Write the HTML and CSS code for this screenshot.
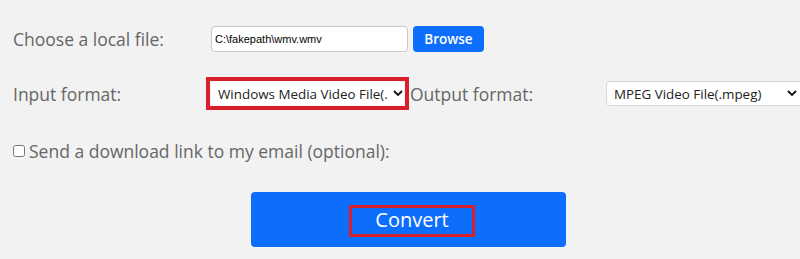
FILE: index.html
```html
<!DOCTYPE html>
<html lang="en">
<head>
<meta charset="utf-8">
<title>Convert</title>
<link rel="stylesheet" href="styles.css">
</head>
<body>
<form class="form">
  <div class="row row-file">
    <label class="label label-file">Choose a local file:</label>
    <input class="file-input" type="text" value="C:\fakepath\wmv.wmv">
    <button type="button" class="browse">Browse</button>
  </div>
  <div class="row row-format">
    <label class="label label-in">Input format:</label>
    <span class="highlight">
      <span class="select-wrap sel-in">
        <select class="select"><option>Windows Media Video File(.wmv)</option></select>
        <svg class="chev" viewBox="0 0 10 6" width="10" height="6"><path d="M1 1 L5 5 L9 1" fill="none" stroke="#111" stroke-width="1.8"/></svg>
      </span>
    </span>
    <label class="label label-out">Output format:</label>
    <span class="select-wrap sel-out">
      <select class="select"><option>MPEG Video File(.mpeg)</option></select>
      <svg class="chev" viewBox="0 0 10 6" width="10" height="6"><path d="M1 1 L5 5 L9 1" fill="none" stroke="#111" stroke-width="1.8"/></svg>
    </span>
  </div>
  <div class="row row-email">
    <input class="check" type="checkbox" id="em">
    <label class="label" for="em">Send a download link to my email (optional):</label>
  </div>
  <div class="row row-submit">
    <button type="button" class="convert"><span class="convert-text">Convert</span></button>
  </div>
</form>
</body>
</html>
```
FILE: styles.css
```css
html, body {
  margin: 0;
  padding: 0;
  background: #f2f2f2;
  overflow: hidden;
}
body {
  width: 800px;
  height: 259px;
  font-family: "Open Sans", "Liberation Sans", sans-serif;
}
.form {
  display: flex;
  flex-direction: column;
  padding: 26px 0 0 13px;
}
.row {
  display: flex;
  align-items: center;
}
.row > * {
  flex-shrink: 0;
}
.label {
  font-size: 17.5px;
  color: #666;
  white-space: nowrap;
}
.row-file {
  height: 26px;
}
.label-file {
  width: 198px;
}
.file-input {
  box-sizing: border-box;
  width: 197px;
  height: 26px;
  margin: 0;
  padding: 0 3px;
  border: 1px solid #c8c8c8;
  border-radius: 4px;
  background: #fff;
  font-family: "Liberation Sans", Arial, sans-serif;
  font-size: 11px;
  color: #000;
}
.browse {
  box-sizing: border-box;
  width: 71px;
  height: 26px;
  margin: 0 0 0 5px;
  padding: 0;
  border: 0;
  border-radius: 4px;
  background: #0d6efd;
  color: #fff;
  font-family: "Open Sans", sans-serif;
  font-size: 13.5px;
  font-weight: 600;
}
.row-format {
  margin-top: 25px;
  height: 33px;
}
.label-in {
  width: 193px;
}
.highlight {
  display: flex;
  border: 4px solid #d81f2c;
  padding: 1px;
}
.select-wrap {
  position: relative;
  display: flex;
}
.select {
  appearance: none;
  -webkit-appearance: none;
  box-sizing: border-box;
  margin: 0;
  padding: 0 16px 0 7px;
  background: #fff;
  font-family: "Open Sans", sans-serif;
  font-size: 13.4px;
  color: #222;
}
.sel-in .select {
  width: 193px;
  height: 23px;
  border: 0;
}
.chev {
  position: absolute;
  top: 50%;
  margin-top: -4px;
  pointer-events: none;
}
.sel-in .chev {
  right: 1px;
}
.label-out {
  width: 196px;
  margin-left: 1px;
}
.sel-out .select {
  width: 198px;
  height: 25px;
  border: 1px solid #d6d6d6;
  border-radius: 4px;
}
.sel-out .chev {
  right: 7px;
}
.row-email {
  margin-top: 29px;
  height: 24px;
}
.check {
  width: 12px;
  height: 12px;
  margin: 0 4px 0 0;
}
.row-submit {
  margin-top: 29px;
  padding-left: 238px;
}
.convert {
  box-sizing: border-box;
  width: 315px;
  height: 55px;
  margin: 0;
  padding: 0 0 0 7px;
  border: 0;
  border-radius: 4px;
  background: #0d6efd;
  display: flex;
  align-items: center;
  justify-content: center;
}
.convert-text {
  box-sizing: border-box;
  width: 126px;
  height: 32px;
  margin-top: 2px;
  border: 3px solid #d81f2c;
  color: #fff;
  font-family: "Open Sans", sans-serif;
  font-size: 20px;
  line-height: 24px;
  text-align: center;
}
```
